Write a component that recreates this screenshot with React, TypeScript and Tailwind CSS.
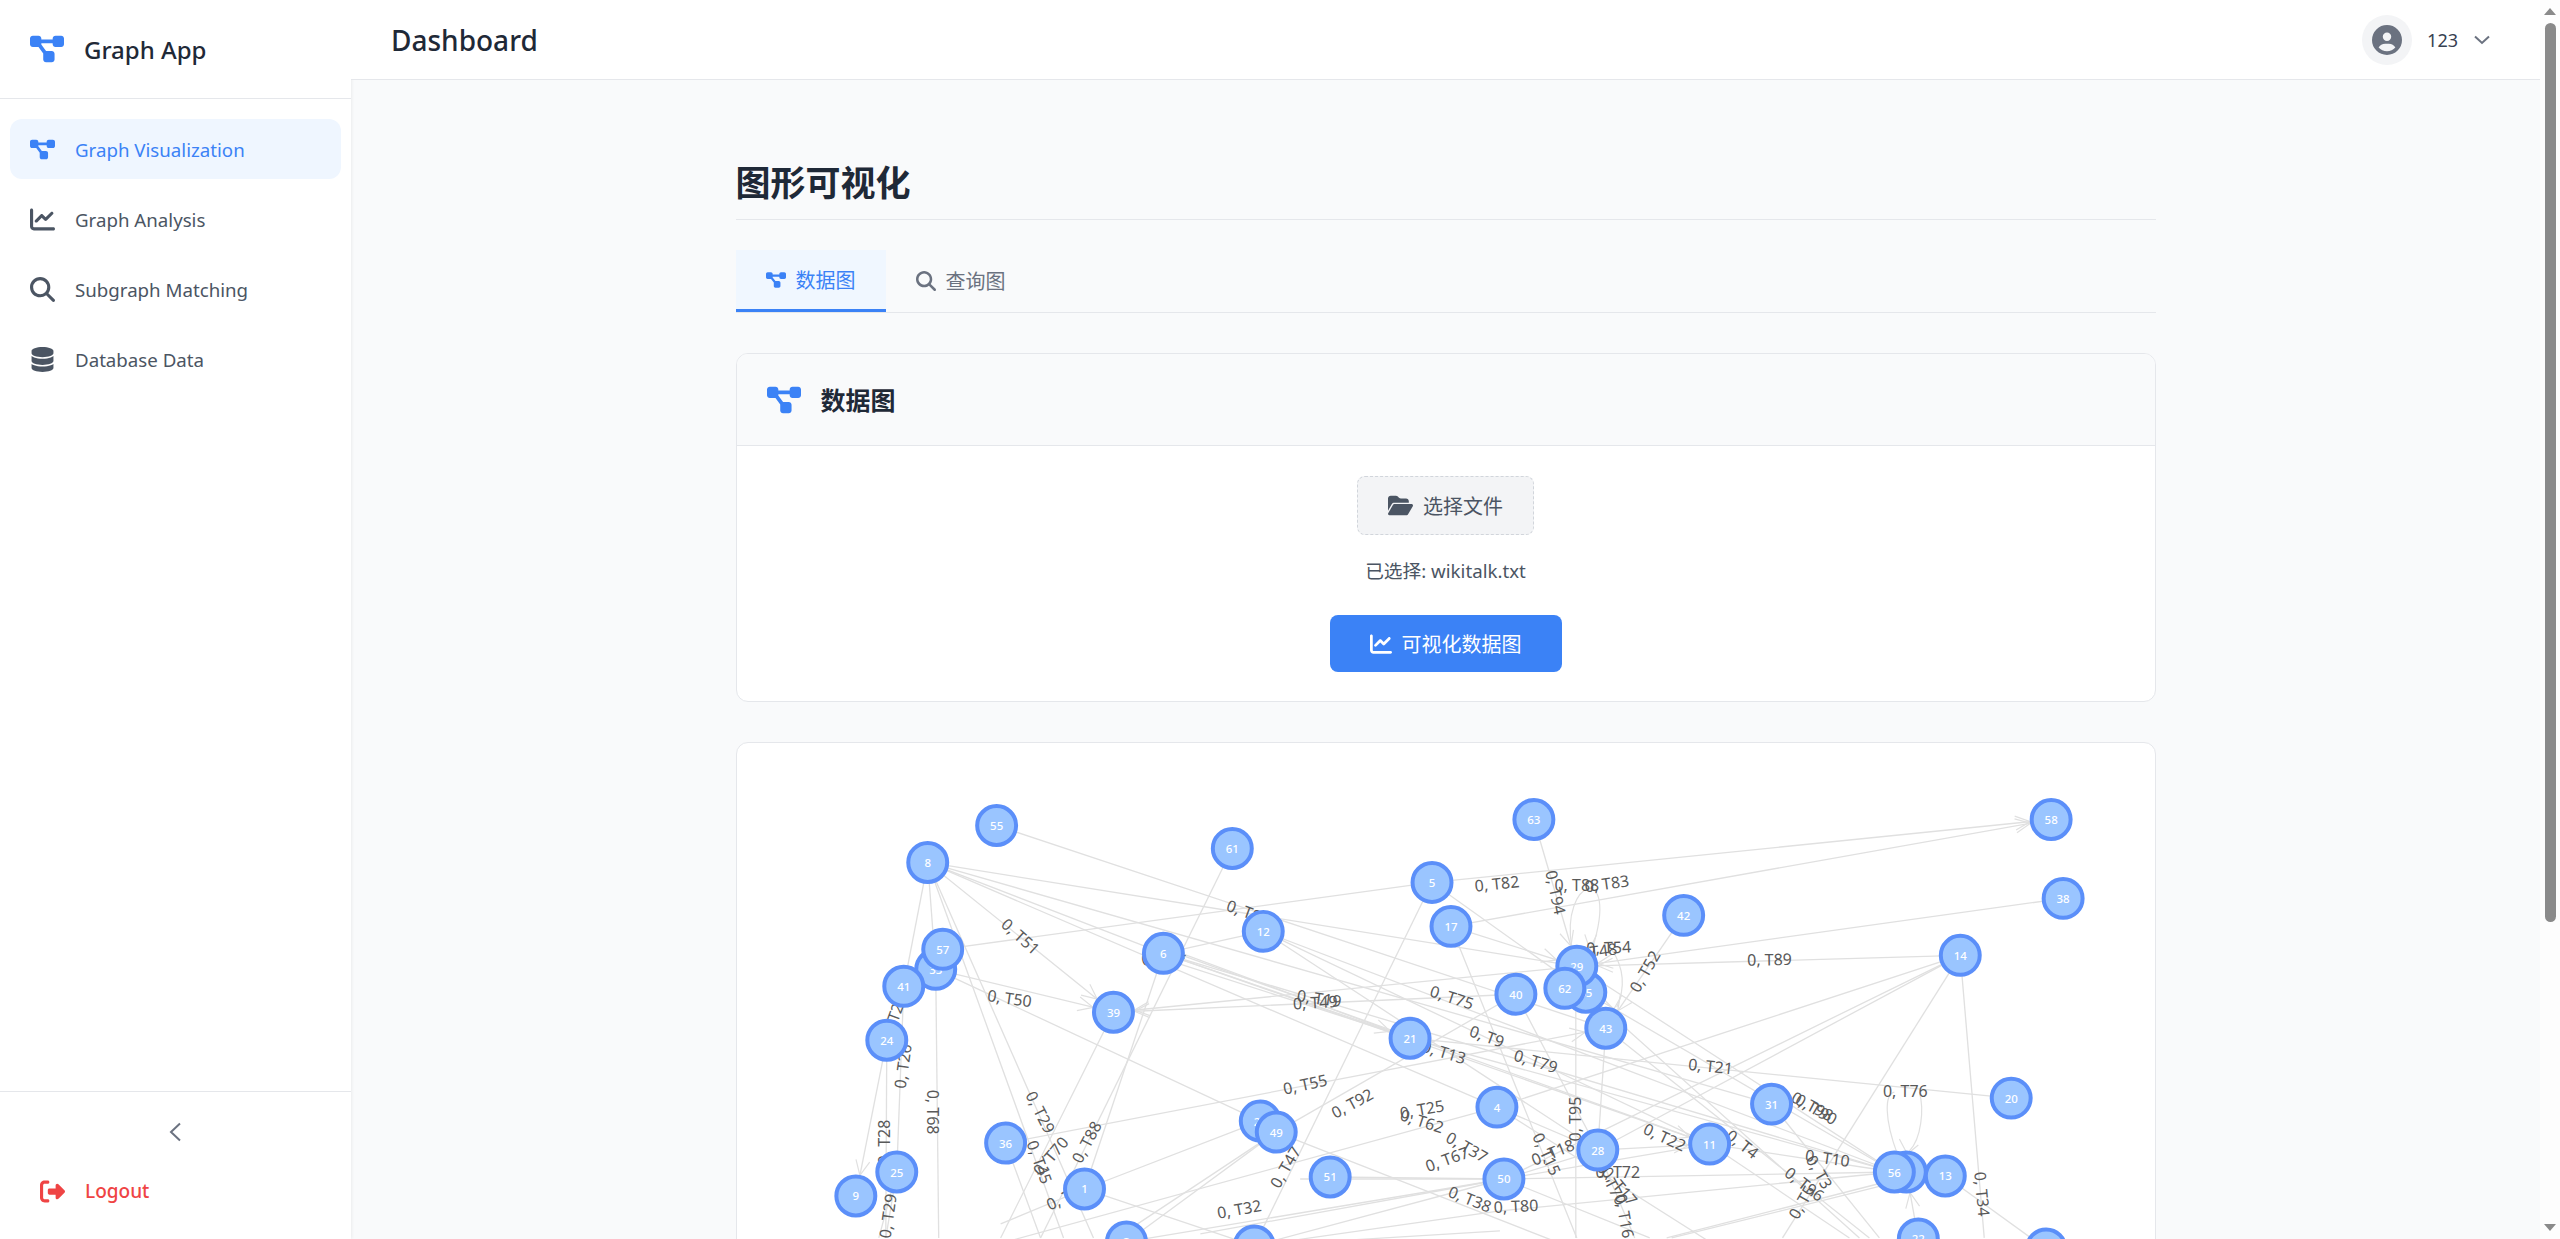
import React from "react";
import { FaDiagramProject, FaChartLine, FaMagnifyingGlass, FaDatabase, FaRightFromBracket, FaCircleUser, FaFolderOpen } from "react-icons/fa6";

const N: Record<string, [number, number]> = {
  "55": [996, 826], "8": [927, 863], "61": [1232, 849], "63": [1534, 820], "58": [2052, 820], "38": [2064, 899],
  "5": [1432, 883], "17": [1451, 927], "12": [1263, 932], "42": [1684, 916], "33": [935, 970], "57": [942, 950],
  "41": [903, 987], "6": [1163, 954], "14": [1961, 956], "39": [1113, 1013], "35": [1586, 993], "29": [1577, 967],
  "62": [1565, 989], "40": [1516, 995], "43": [1606, 1029], "24": [886, 1041], "21": [1410, 1039], "20": [2012, 1099],
  "31": [1772, 1105], "4": [1497, 1108], "36": [1005, 1144], "27": [1260, 1122], "49": [1276, 1133], "28": [1598, 1151],
  "11": [1710, 1145], "25": [896, 1173], "51": [1330, 1178], "50": [1504, 1180], "9": [855, 1197], "1": [1084, 1190],
  "46": [1907, 1173], "56": [1895, 1173], "13": [1946, 1177], "3": [1126, 1243], "7": [1254, 1247], "22": [1919, 1240], "19": [2047, 1250],
};
const order = ["55","8","61","63","58","38","5","17","12","42","33","57","41","6","14","39","35","29","62","40","43","24","21","20","31","4","36","27","49","28","11","25","51","50","9","1","46","56","13","3","7","22","19"];

type P = string | [number, number];
const E: [P, P, number?][] = [
  ["55","43"],["8","39",1],["8","6"],["8","29"],["8","31"],["8","4"],["8","41"],["8","33"],["8",[1063,1239]],["8",[1093,1239]],
  ["57","5"],["33",[938,1239]],["33","39",1],["33","27"],["41","25"],["24","9",1],["24",[885,1239]],["25",[885,1239]],["25",[878,1239]],
  ["36",[1040,1239]],["36","43",1],["61",[1040,1239]],["39",[1000,1239]],["6","1"],["1",[1000,1225]],["1","27"],["1","7"],
  ["49","3"],["49",[1110,1243]],[[980,1250],"4"],["7","5"],["51","50"],["7","50"],["7",[1500,1212]],["7",[1500,1232]],["3","50"],
  ["49",[1600,1260]],["49","40"],["29","39",1],["40","39",1],["12","6"],["12","11"],["12","28"],["12","56"],["21","56"],["6","56"],
  ["6","21",1],[[1165,948],"21"],[[1165,960],"21"],["6","11",1],[[1165,950],"11"],
  ["5","58",1],["17","58",1],["38","29",1],["14","29",1],["63","29",1],["42","43",1],["17","29",1],["5","35"],
  ["14","4"],["14","28"],["14","50"],["14",[1783,1239]],["14",[1985,1239]],["20","21"],["13","19"],["22","46",1],
  ["29","56"],["35","56"],["43",[1870,1239]],["35",[1860,1239]],["28","43"],[[1576,1000],[1576,1239]],["17",[1577,1239]],["40","28"],
  ["11","56"],["11",[1850,1239]],["50","56"],[[1500,1212],"56"],[[1667,1239],[1890,1182]],[[1672,1239],[1890,1185]],
  ["28","11",1],["50","11"],["50","28"],["31",[1880,1239]],["4","28"],["4",[1800,1300]],["50",[1650,1239]],["28",[1635,1239]],["50",[1300,1180]],
  ["50",[1200,1235]],
];

const L: [string, number, number, number][] = [
  ["0, T51",1020,937,42],["0, T50",1009,999,8],["0, T84",1248,913,20],["0, T74",1163,957,-10],["0, T49",1315,1003,-3],["0, T19",1319,999,8],
  ["0, T82",1497,884,-6],["0, T83",1607,884,-8],["0, T88",1577,886,0],["0, T94",1556,893,78],["0, T54",1609,948,-2],["0, T48",1595,952,-8],
  ["0, T52",1645,972,-60],["0, T89",1770,960,-1],["0, T75",1452,998,18],["0, T9",1487,1037,20],["0, T79",1536,1062,17],["0, T13",1444,1053,17],
  ["0, T21",1711,1067,6],["0, T76",1906,1092,0],["0, T22",1665,1138,25],["0, T4",1743,1145,38],["0, T10",1828,1159,8],["0, T96",1805,1185,38],
  ["0, T98",1813,1107,28],["0, T90",1817,1110,30],["0, T95",1575,1120,-90],["0, T18",1553,1153,-22],["0, T15",1547,1155,65],["0, T72",1618,1173,0],
  ["0, T17",1620,1187,50],["0, T70",1612,1185,62],["0, T16",1625,1217,80],["0, T80",1516,1207,-3],["0, T38",1470,1200,22],["0, T37",1467,1148,30],
  ["0, T67",1447,1160,-20],["0, T25",1422,1110,-10],["0, T62",1422,1122,18],["0, T92",1352,1104,-28],["0, T55",1305,1085,-12],
  ["0, T47",1285,1168,-60],["0, T32",1239,1210,-10],["0, T88",1086,1143,-62],["0, T70",1050,1157,-50],["0, T29",1040,1113,63],
  ["0, T45",1039,1163,70],["0, T40",1067,1197,-25],["0, T68",932,1113,90],["0, T28",883,1143,-90],["0, T26",902,1067,-82],["0, T29",887,1217,-82],
  ["0, T27",893,1017,-70],["0, T34",1983,1195,85],["0, T3",1820,1173,60],["0, T5",1802,1203,-60],
];

function pt(p: P): [number, number] {
  return typeof p === "string" ? N[p] : p;
}

function Arrow({ a, b }: { a: [number, number]; b: [number, number] }) {
  const dx = b[0] - a[0], dy = b[1] - a[1];
  const d = Math.hypot(dx, dy), ux = dx / d, uy = dy / d;
  const tx = b[0] - ux * 21, ty = b[1] - uy * 21;
  const bx = tx - ux * 15, by = ty - uy * 15;
  return <polyline points={`${bx - uy * 7},${by + ux * 7} ${tx},${ty} ${bx + uy * 7},${by - ux * 7}`} fill="none" stroke="#e0e0e0" strokeWidth="1.2" />;
}

function Graph() {
  return (
    <svg viewBox="736 744 1420 872" className="block h-[872px] w-full" style={{ fontFamily: '"Noto Sans", sans-serif' }}>
      <g>
        {E.map((e, i) => {
          const a = pt(e[0]), b = pt(e[1]);
          return (
            <g key={i}>
              <line x1={a[0]} y1={a[1]} x2={b[0]} y2={b[1]} stroke="#e0e0e0" strokeWidth="1.3" />
              {e[2] ? <Arrow a={a} b={b} /> : null}
            </g>
          );
        })}
        <path d="M1572 948 C1560 880 1620 860 1593 948" fill="none" stroke="#e0e0e0" strokeWidth="1.2" />
        <polyline points="1585,935 1590,950 1597,935" fill="none" stroke="#e0e0e0" strokeWidth="1.2" />
        <path d="M1612 950 C1625 970 1625 990 1617 1008" fill="none" stroke="#e0e0e0" strokeWidth="1.2" />
        <polyline points="1604,1000 1614,1010 1622,996" fill="none" stroke="#e0e0e0" strokeWidth="1.2" />
        <path d="M1898 1155 C1885 1120 1885 1095 1895 1093 M1920 1093 C1925 1110 1922 1140 1910 1152" fill="none" stroke="#e0e0e0" strokeWidth="1.2" />
        <polyline points="1900,1140 1908,1155 1919,1146" fill="none" stroke="#e0e0e0" strokeWidth="1.2" />
      </g>
      <g fill="#595959" fontSize="16" textAnchor="middle" dominantBaseline="central">
        {L.map((l, i) => (
          <text key={i} x={l[1]} y={l[2]} transform={`rotate(${l[3]} ${l[1]} ${l[2]})`}>{l[0]}</text>
        ))}
      </g>
      <g>
        {order.map((id) => (
          <g key={id}>
            <circle cx={N[id][0]} cy={N[id][1]} r="19.5" fill="#9ac5ff" stroke="#5b8ff9" strokeWidth="4" />
            <text x={N[id][0]} y={N[id][1]} fill="#ffffff" fontSize="11.5" fontWeight="500" textAnchor="middle" dominantBaseline="central">{id}</text>
          </g>
        ))}
      </g>
    </svg>
  );
}

function NavItem({ icon, label, active }: { icon: React.ReactNode; label: string; active?: boolean }) {
  return (
    <div className={active ? "mb-[10px] flex h-[60px] items-center rounded-xl bg-[#eff6ff] pl-5 text-[#3b82f6]" : "mb-[10px] flex h-[60px] items-center rounded-xl pl-5 text-[#4b5563]"}>
      <span className="flex w-[25px] justify-center">{icon}</span>
      <span className="ml-5 pt-[2px] text-[18.7px] leading-none">{label}</span>
    </div>
  );
}

function Scrollbar() {
  return (
    <div className="sticky top-0 flex h-screen w-5 shrink-0 flex-col items-center bg-[#fdfdfd]">
      <div className="mt-2 h-0 w-0 border-x-[6.5px] border-b-[7px] border-x-transparent border-b-[#8a8a8a]" />
      <div className="mt-2 h-[899px] w-[11px] rounded-full bg-[#8a8a8a]" />
      <div className="mt-auto mb-2 h-0 w-0 border-x-[6.5px] border-t-[7px] border-x-transparent border-t-[#8a8a8a]" />
    </div>
  );
}

export default function App() {
  return (
    <div className="flex min-h-screen bg-[#f9fafb] text-[#1f2937]" style={{ fontFamily: '"Noto Sans", "Noto Sans CJK SC", sans-serif' }}>
      <aside className="sticky top-0 flex h-screen w-[351px] shrink-0 flex-col bg-white shadow-[1px_0_3px_rgba(0,0,0,0.06)]">
        <div className="flex h-[99px] shrink-0 items-center border-b border-[#e5e7eb] pl-[30px]">
          <FaDiagramProject size={34} className="text-[#3b82f6]" />
          <span className="ml-5 pt-px text-[24px] font-medium leading-none">Graph App</span>
        </div>
        <nav className="flex-1 px-[10px] pt-5">
          <NavItem active icon={<FaDiagramProject size={25} />} label="Graph Visualization" />
          <NavItem icon={<FaChartLine size={25} />} label="Graph Analysis" />
          <NavItem icon={<FaMagnifyingGlass size={25} />} label="Subgraph Matching" />
          <NavItem icon={<FaDatabase size={25} />} label="Database Data" />
        </nav>
        <div className="h-[148px] shrink-0 border-t border-[#e5e7eb]">
          <div className="flex h-[80px] items-center justify-center pr-[1px]">
            <svg width="13" height="20" viewBox="0 0 13 20" fill="none" stroke="#6b7280" strokeWidth="2"><polyline points="11,1.5 2,10 11,18.5" /></svg>
          </div>
          <div className="mt-[7px] flex items-center pl-10 text-[#ef4444]">
            <FaRightFromBracket size={25} />
            <span className="ml-5 text-[19px] font-medium leading-none">Logout</span>
          </div>
        </div>
      </aside>
      <div className="min-w-0 flex-1">
        <header className="sticky top-0 z-10 flex h-20 items-center justify-between border-b border-[#e5e7eb] bg-white pl-10 pr-[50px]">
          <h2 className="text-[28px] font-medium leading-none">Dashboard</h2>
          <div className="flex items-center">
            <div className="flex h-[50px] w-[50px] items-center justify-center rounded-full bg-[#f3f4f6] text-[#6b7280]"><FaCircleUser size={30} /></div>
            <span className="ml-[15px] text-[18px] leading-none text-[#374151]">123</span>
            <svg className="ml-4" width="16" height="10" viewBox="0 0 16 10" fill="none" stroke="#6b7280" strokeWidth="2"><polyline points="1,1.5 8,8 15,1.5" /></svg>
          </div>
        </header>
        <main className="mx-auto w-[1420px] pb-10 pt-[82px]">
          <h1 className="border-b border-[#e5e7eb] pb-[15px] text-[35px] font-bold leading-[42px]">图形可视化</h1>
          <div className="mt-[30px] flex border-b border-[#e5e7eb]">
            <div className="flex h-[62px] w-[150px] items-center justify-center border-b-[3px] border-[#3b82f6] bg-[#f0f7ff] text-[20px] text-[#3b82f6]">
              <FaDiagramProject size={20} /><span className="ml-[10px] pt-[2px]">数据图</span>
            </div>
            <div className="flex h-[62px] w-[150px] items-center justify-center text-[20px] text-[#6b7280]">
              <FaMagnifyingGlass size={20} /><span className="ml-[10px] pt-[2px]">查询图</span>
            </div>
          </div>
          <section className="mt-10 overflow-hidden rounded-xl border border-[#e5e7eb] bg-white">
            <div className="flex h-[92px] items-center border-b border-[#e5e7eb] bg-[#f9fafb] pl-[30px]">
              <FaDiagramProject size={34} className="text-[#3b82f6]" />
              <h3 className="ml-5 pt-[2px] text-[25px] font-bold leading-none">数据图</h3>
            </div>
            <div className="flex flex-col items-center pt-[30px] pb-[29px]">
              <div className="flex h-[59px] w-[177px] items-center justify-center rounded-lg border border-dashed border-[#d1d5db] bg-[#f3f4f6] text-[20px] text-[#4b5563]">
                <FaFolderOpen size={25} /><span className="ml-[10px] pt-[2px]">选择文件</span>
              </div>
              <p className="mt-[20px] text-[18.7px] leading-[32px] text-[#4b5563]">已选择: wikitalk.txt</p>
              <div className="mt-[28px] flex h-[57px] w-[232px] items-center justify-center rounded-lg bg-[#3b82f6] text-[20px] text-white">
                <FaChartLine size={22} /><span className="ml-[10px] pt-[2px]">可视化数据图</span>
              </div>
            </div>
          </section>
          <section className="mt-10 overflow-hidden rounded-xl border border-[#e5e7eb] bg-white">
            <Graph />
          </section>
        </main>
      </div>
      <Scrollbar />
    </div>
  );
}
